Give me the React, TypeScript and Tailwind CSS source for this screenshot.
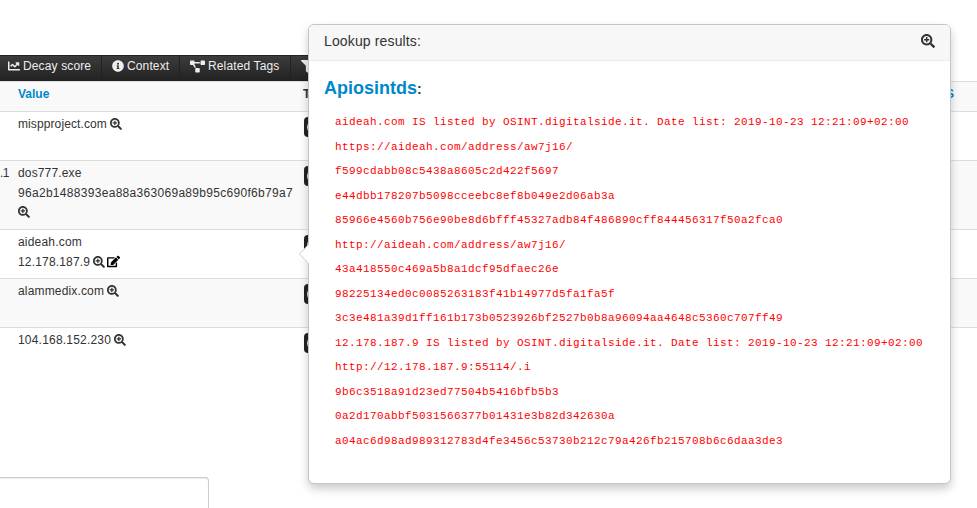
import type { ReactNode } from "react";
import { FaChartLine, FaEdit, FaFilter, FaInfoCircle, FaProjectDiagram, FaSearchPlus } from "react-icons/fa";

const results = [
  "aideah.com IS listed by OSINT.digitalside.it. Date list: 2019-10-23 12:21:09+02:00",
  "https://aideah.com/address/aw7j16/",
  "f599cdabb08c5438a8605c2d422f5697",
  "e44dbb178207b5098cceebc8ef8b049e2d06ab3a",
  "85966e4560b756e90be8d6bfff45327adb84f486890cff844456317f50a2fca0",
  "http://aideah.com/address/aw7j16/",
  "43a418550c469a5b8a1dcf95dfaec26e",
  "98225134ed0c0085263183f41b14977d5fa1fa5f",
  "3c3e481a39d1ff161b173b0523926bf2527b0b8a96094aa4648c5360c707ff49",
  "12.178.187.9 IS listed by OSINT.digitalside.it. Date list: 2019-10-23 12:21:09+02:00",
  "http://12.178.187.9:55114/.i",
  "9b6c3518a91d23ed77504b5416bfb5b3",
  "0a2d170abbf5031566377b01431e3b82d342630a",
  "a04ac6d98ad989312783d4fe3456c53730b212c79a426fb215708b6c6daa3de3",
];

function Tool({ icon, label, className }: { icon: ReactNode; label?: string; className: string }) {
  return (
    <div className={`flex h-full shrink-0 items-center border-r border-[#222] pb-[5px] text-[#eee] ${className}`}>
      {icon}
      {label && <span className="ml-[3px] whitespace-nowrap">{label}</span>}
    </div>
  );
}

function Row({ prefix, className, children }: { prefix?: string; className: string; children: ReactNode }) {
  return (
    <div className={`flex shrink-0 border-t border-[#ddd] ${className}`}>
      <div className="w-[18px] shrink-0 whitespace-nowrap pt-[2px] tracking-[-0.6px]">{prefix}</div>
      <div className="w-[286px] shrink-0 whitespace-nowrap pt-[2px]">{children}</div>
      <div className="mt-[5px] flex h-5 w-8 items-center rounded-[4px] bg-[#222] pl-[2.5px]">
        <span className="size-[14px] rounded-full bg-[#eee]" />
      </div>
    </div>
  );
}

const Zoom = () => <FaSearchPlus size={12} className="inline-block align-[-1.5px]" />;

export default function App() {
  return (
    <div className="relative h-[508px] w-[977px] overflow-hidden bg-white font-['Liberation_Sans',Arial,sans-serif] text-[12px] leading-5 text-[#333]">
      <div className="flex h-full flex-col">
        <div className="mt-[55px] flex h-[26px] w-[600px] shrink-0 border-t border-[#222] bg-linear-to-b from-[#3c3c3c] to-[#222] tracking-[0.13px]">
          <Tool className="w-[102px] pl-[8px]" icon={<FaChartLine size={12} />} label="Decay score" />
          <Tool className="w-[78px] pl-[10px]" icon={<FaInfoCircle size={12} />} label="Context" />
          <Tool className="w-[111px] pl-[10px]" icon={<FaProjectDiagram size={15} />} label="Related Tags" />
          <Tool className="w-[120px] pl-[10px]" icon={<FaFilter size={13} />} />
        </div>
        <div className="flex h-[30px] shrink-0 border-t border-[#ddd] bg-[#f9f9f9] pt-[2px] font-bold">
          <span className="ml-[18px] w-[285px] text-[#08c]">Value</span>
          <span>T</span>
          <span className="ml-auto mr-[23px] text-[#08c]">S</span>
        </div>
        <Row className="h-[49px]"><span className="tracking-[0.1px]">mispproject.com</span> <Zoom /></Row>
        <Row className="h-[69px] bg-[#f9f9f9]" prefix=".1">
          <div className="tracking-[0.15px]">dos777.exe</div>
          <div className="tracking-[0.3px]">96a2b1488393ea88a363069a89b95c690f6b79a7</div>
          <div><FaSearchPlus size={12} className="inline-block align-[-1px]" /></div>
        </Row>
        <Row className="h-[49px]">
          <div className="tracking-[0.2px]">aideah.com</div>
          <div className="flex items-center">
            <span className="mr-[3px] tracking-[0.17px]">12.178.187.9</span>
            <FaSearchPlus size={12} />
            <FaEdit size={13} className="mb-[1px] ml-[2px] text-black" />
          </div>
        </Row>
        <Row className="h-[49px] bg-[#f9f9f9]"><span className="tracking-[0.16px]">alammedix.com</span> <Zoom /></Row>
        <Row className="h-[49px]"><span className="tracking-[0.2px]">104.168.152.230</span> <Zoom /></Row>
        <div className="mt-[101px] h-[40px] w-[209px] shrink-0 rounded-tr-[4px] border-t border-r border-[#ccc] shadow-[inset_0_1px_1px_rgba(0,0,0,0.075)]" />
      </div>

      <div className="absolute left-[308px] top-[24px] h-[460px] w-[643px] rounded-[6px] border border-[#c4c4c4] bg-white shadow-[0_5px_10px_rgba(0,0,0,0.2)]">
        <svg className="absolute -left-[10px] top-[218px]" width="11" height="22" viewBox="0 0 11 22">
          <path d="M11 0 0.5 11 11 22Z" fill="#fff" />
          <path d="M10 1 0.5 11 10 21" fill="none" stroke="#ccc" />
        </svg>
        <div className="flex h-9 items-center justify-between rounded-t-[5px] border-b border-[#ebebeb] bg-[#f7f7f7] pb-[3px] pl-[15px] pr-[15px] text-[14px]">
          <span className="tracking-[0.14px]">Lookup results:</span>
          <FaSearchPlus size={14} />
        </div>
        <div className="pl-[15px] pt-[17px] text-[14px] font-bold"><span className="text-[18px] text-[#08c]">Apiosintds</span>:</div>
        <div className="ml-[26px] mt-[11px] whitespace-pre font-['Liberation_Mono',monospace] text-[11px] leading-[24.5px] tracking-[0.4px] text-[#f00]">
          {results.map((r) => <div key={r}>{r}</div>)}
        </div>
      </div>
    </div>
  );
}
